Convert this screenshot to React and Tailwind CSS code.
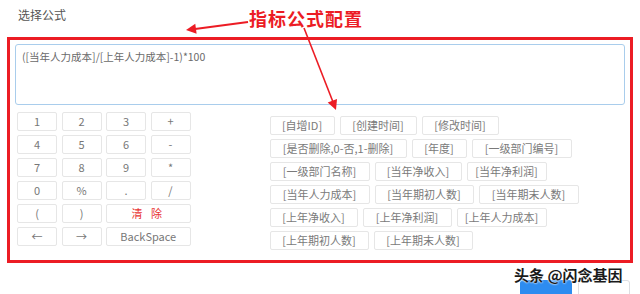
import React from "react";

const keys = [
  { label: "1" }, { label: "2" }, { label: "3" }, { label: "+" },
  { label: "4" }, { label: "5" }, { label: "6" }, { label: "-" },
  { label: "7" }, { label: "8" }, { label: "9" }, { label: "*" },
  { label: "0" }, { label: "%" }, { label: "." }, { label: "/" },
  { label: "(" }, { label: ")" }, { label: "清 除", wide: true, red: true },
  { label: "←" }, { label: "→" }, { label: "BackSpace", wide: true },
];

const fieldRows = [
  [
    { label: "[自增ID]", w: "w-[65px]" },
    { label: "[创建时间]", w: "w-[77px]" },
    { label: "[修改时间]", w: "w-[77px]" },
  ],
  [
    { label: "[是否删除,0-否,1-删除]", w: "w-[137px]" },
    { label: "[年度]", w: "w-[55px]" },
    { label: "[一级部门编号]", w: "w-[100px]" },
  ],
  [
    { label: "[一级部门名称]", w: "w-[100px]" },
    { label: "[当年净收入]", w: "w-[87px]" },
    { label: "[当年净利润]", w: "w-[80px]" },
  ],
  [
    { label: "[当年人力成本]", w: "w-[100px]" },
    { label: "[当年期初人数]", w: "w-[99px]" },
    { label: "[当年期末人数]", w: "w-[100px]" },
  ],
  [
    { label: "[上年净收入]", w: "w-[88px]" },
    { label: "[上年净利润]", w: "w-[89px]" },
    { label: "[上年人力成本]", w: "w-[90px]" },
  ],
  [
    { label: "[上年期初人数]", w: "w-[99px]" },
    { label: "[上年期末人数]", w: "w-[99px]" },
  ],
];

export default function App() {
  return (
    <div className="relative w-[640px] h-[294px] overflow-hidden bg-white font-['Noto_Sans_CJK_SC',sans-serif]">
      {/* dialog title */}
      <div className="h-[37px] pl-[18px] pt-[7px] text-[12px] leading-[16px] text-[#555]">选择公式</div>

      {/* highlighted formula area */}
      <div className="mx-[7px] h-[226px] border-[3px] border-[#ec1c24] px-[5px] pt-[4px]">
        <div className="h-[61px] rounded-[3px] border border-[#a9cdec] px-[6px] pt-[5px] text-[10.5px] leading-[14px] text-[#6a6a6a]">
          ([当年人力成本]/[上年人力成本]-1)*100
        </div>

        <div className="flex pt-[7px] pl-[2px]">
          <div className="grid grid-cols-[40px_40px_40px_40px] auto-rows-[19px] gap-x-[4.5px] gap-y-[4px]">
            {keys.map((k) => (
              <button
                key={k.label}
                className={`flex items-center justify-center rounded-[2px] border border-[#e6e6e6] bg-white text-[11px] ${
                  k.wide ? "col-span-2" : ""
                } ${k.red ? "text-[#e8322f] tracking-[3px]" : "text-[#777]"}`}
              >
                {k.label}
              </button>
            ))}
          </div>

          <div className="ml-[79px] flex flex-col gap-[4px] pt-[4px]">
            {fieldRows.map((row, i) => (
              <div key={i} className="flex gap-[5px]">
                {row.map((f) => (
                  <button
                    key={f.label}
                    className={`${f.w} h-[19px] flex items-center justify-center rounded-[2px] border border-[#e6e6e6] bg-white text-[11px] text-[#7a7a7a] whitespace-nowrap`}
                  >
                    {f.label}
                  </button>
                ))}
              </div>
            ))}
          </div>
        </div>
      </div>

      {/* footer buttons, cut off by the window */}
      <div className="flex justify-end gap-[6px] pr-[10px] pt-[17px]">
        <div className="h-[22px] w-[52px] rounded-[3px] bg-[#2d8cf0]" />
        <div className="h-[22px] w-[52px] rounded-[3px] border border-[#dcdee2] bg-white" />
      </div>

      {/* annotation */}
      <svg className="pointer-events-none absolute left-0 top-0" width="640" height="294">
        <line x1="248" y1="22" x2="195" y2="29" stroke="#ec1c24" strokeWidth="2" />
        <polygon points="186,30 196.6,33.7 195.3,23.8" fill="#ec1c24" />
        <line x1="304" y1="28" x2="333" y2="102" stroke="#ec1c24" strokeWidth="1.6" />
        <polygon points="336,110 337,98.9 327.7,102.5" fill="#ec1c24" />
      </svg>
      <div className="absolute left-[249px] top-[6px] text-[18px] font-bold leading-[24px] tracking-[1px] text-[#ec1c24]">
        指标公式配置
      </div>

      {/* watermark */}
      <div className="absolute left-[514px] top-[265px] text-[15px] font-bold leading-[20px] text-[#1a1a1a] [text-shadow:0_0_2px_#fff,0_0_2px_#fff]">
        头条 @闪念基因
      </div>
    </div>
  );
}
